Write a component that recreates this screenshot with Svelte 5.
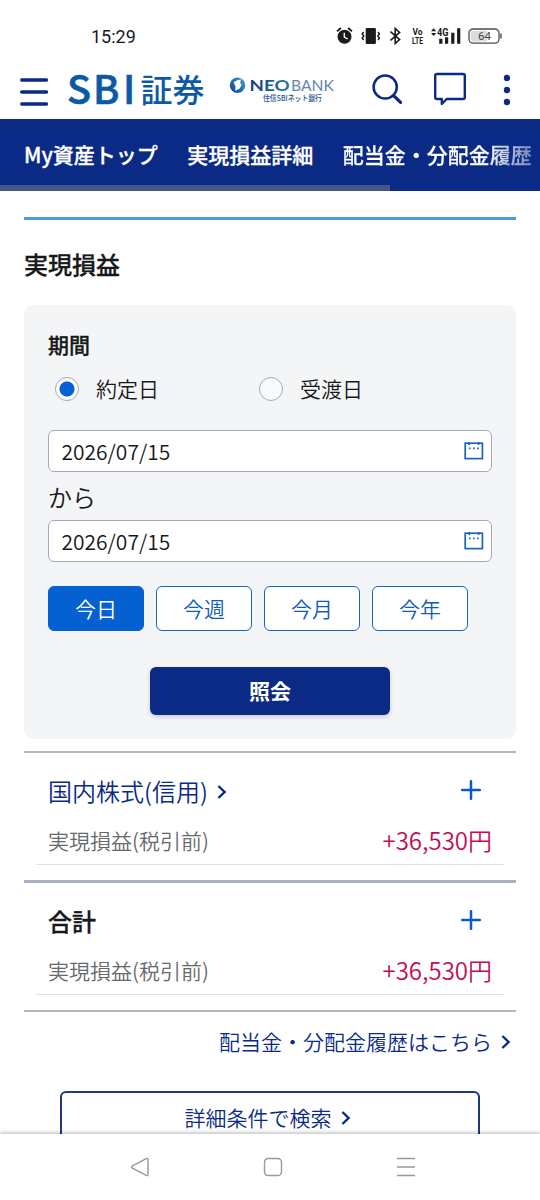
<script lang="ts">
    const tabs = ["My資産トップ", "実現損益詳細", "配当金・分配金履歴"];
    const dateTypes = ["約定日", "受渡日"];
    const ranges = ["今日", "今週", "今月", "今年"];

    const results = [
        { name: "国内株式(信用)", link: true, label: "実現損益(税引前)", value: "+36,530円" },
        { name: "合計", link: false, label: "実現損益(税引前)", value: "+36,530円" },
    ];

    let dateType = $state("約定日");
    let range = $state("今日");
    let from = $state("2026/07/15");
    let to = $state("2026/07/15");
</script>

{#snippet chevron()}
    <svg class="chevron" width="10" height="16" viewBox="0 0 10 16">
        <path d="M1.4 2 L7.6 8 L1.4 14" fill="none" stroke="currentColor" stroke-width="2.4" />
    </svg>
{/snippet}

{#snippet calendar()}
    <svg class="calendar" width="20" height="20" viewBox="0 0 20 20" fill="none" stroke="#1765c1">
        <rect x="1.2" y="2.2" width="17.2" height="15.4" stroke-width="1.7" />
        <path d="M5.2 1v3M14.6 1v3" stroke-width="1.6" />
        <path d="M5 7.4h1.6M9 7.4h1.6M13 7.4h1.6" stroke-width="1.7" />
    </svg>
{/snippet}

<div class="screen">
    <div class="status">
        <span class="time">15:29</span>
        <svg class="status-icons" width="166" height="20" viewBox="0 0 166 20">
            <!-- alarm -->
            <circle cx="8.5" cy="10.8" r="7" fill="#1b1b1b" />
            <path d="M1 5.2L5 2M16 5.2L12 2" stroke="#1b1b1b" stroke-width="1.8" />
            <path d="M8.3 6.8v4.4l3.4 1.8" fill="none" stroke="#fff" stroke-width="1.4" />
            <!-- vibrate -->
            <rect x="29.7" y="2" width="10.2" height="16" rx="1.2" fill="#1b1b1b" />
            <path
                d="M27.6 6l-1.4 2 1.6 2-1.6 2 1.4 2M42 6l1.4 2-1.6 2 1.6 2-1.4 2"
                fill="none"
                stroke="#1b1b1b"
                stroke-width="1.5"
            />
            <!-- bluetooth -->
            <path
                d="M54.5 5.6L63.6 13.6 59.2 17.4V2.6L63.6 6.4 54.5 14.4"
                fill="none"
                stroke="#1b1b1b"
                stroke-width="1.6"
            />
            <text x="76.4" y="9" font-size="9.5" textLength="10" lengthAdjust="spacingAndGlyphs">Vo</text>
            <text x="76" y="18" font-size="9.5" textLength="11" lengthAdjust="spacingAndGlyphs">LTE</text>
            <!-- signal -->
            <path d="M95 5.2l2.6-3 2.6 3zM95 7l2.6 3 2.6-3z" fill="#1b1b1b" />
            <text x="101" y="9.6" font-size="11" textLength="11.5" lengthAdjust="spacingAndGlyphs">4G</text>
            <path
                d="M104.8 17.8v-5M110.6 17.8v-6.5M116.8 17.8v-11M122.7 17.8v-15.5"
                stroke="#1b1b1b"
                stroke-width="3.2"
            />
            <!-- battery -->
            <rect x="133" y="3" width="30" height="14.2" rx="4.2" fill="#fff" stroke="#4c4c4c" stroke-width="1.3" />
            <path d="M137 4.8h14v10.6h-14q-2.2 0-2.2-2.2v-6.2q0-2.2 2.2-2.2z" fill="#dcdcdc" />
            <path d="M165 7.6v5" stroke="#4c4c4c" stroke-width="1.4" />
            <text class="level" x="142" y="14.2" font-size="11.5">64</text>
        </svg>
    </div>

    <header>
        <svg class="menu" width="28" height="30" viewBox="0 0 28 30">
            <path
                d="M1.8 3h24.6M1.8 15h24.6M1.8 27h24.6"
                stroke="#0a2a86"
                stroke-width="3.6"
                stroke-linecap="round"
            />
        </svg>
        <svg class="logo" width="140" height="44" viewBox="0 0 140 44">
            <text class="latin" x="-1 25 55" y="34.5" font-size="39.5">SBI</text>
            <text x="72.5" y="32.5" font-size="32" font-weight="500">証券</text>
        </svg>
        <svg class="neobank" width="108" height="34" viewBox="0 0 108 34">
            <defs>
                <linearGradient id="ball" x1="0" y1="1" x2="1" y2="0">
                    <stop offset="0" stop-color="#0c3f8c" />
                    <stop offset="1" stop-color="#3da4d8" />
                </linearGradient>
                <linearGradient id="word" x1="0" x2="1">
                    <stop offset="0" stop-color="#123f7d" />
                    <stop offset="1" stop-color="#2277a8" />
                </linearGradient>
            </defs>
            <circle cx="8.5" cy="11.3" r="7.7" fill="url(#ball)" />
            <path d="M4.6 8.6l3-2.2 4.4-1.2-.8 3.4 1.4 2.6-2.2 3.6-4.4 2 .6-4.4z" fill="#fff" />
            <text x="20.6" y="16.8" font-size="16" font-weight="700" fill="url(#word)" textLength="40" lengthAdjust="spacingAndGlyphs">NEO</text>
            <text x="62" y="16.8" font-size="16" font-weight="400" fill="#6486ac" textLength="43" lengthAdjust="spacingAndGlyphs">BANK</text>
            <text class="sub" x="34" y="27" font-size="7.6" textLength="59" lengthAdjust="spacingAndGlyphs">住信SBIネット銀行</text>
        </svg>
        <svg class="search" width="32" height="32" viewBox="0 0 32 32" fill="none" stroke="#0a2a86">
            <circle cx="13.2" cy="14" r="11.6" stroke-width="2.5" />
            <path d="M21.6 22.6l7 6.8" stroke-width="3.2" stroke-linecap="round" />
        </svg>
        <svg class="chat" width="34" height="34" viewBox="0 0 34 34">
            <path
                d="M4 2h26q1.8 0 1.8 1.8v21.4q0 1.8-1.8 1.8h-16.4l-4.8 5v-5h-4.8q-1.8 0-1.8-1.8v-21.4q0-1.8 1.8-1.8z"
                fill="none"
                stroke="#0a2a86"
                stroke-width="2.4"
                stroke-linejoin="round"
            />
        </svg>
        <svg class="more" width="8" height="32" viewBox="0 0 8 32" fill="#0a2a86">
            <circle cx="4" cy="4" r="3.2" />
            <circle cx="4" cy="16" r="3.2" />
            <circle cx="4" cy="28" r="3.2" />
        </svg>
    </header>

    <nav>
        {#each tabs as tab}
            <a href="#top">{tab}</a>
        {/each}
    </nav>

    <main>
        <h1>実現損益</h1>

        <section class="filter">
            <h2>期間</h2>
            <div class="radios">
                {#each dateTypes as type}
                    <label>
                        <input type="radio" name="dateType" value={type} bind:group={dateType} />
                        <span>{type}</span>
                    </label>
                {/each}
            </div>

            <div class="field">
                <input type="text" bind:value={from} />
                {@render calendar()}
            </div>
            <p class="until">から</p>
            <div class="field">
                <input type="text" bind:value={to} />
                {@render calendar()}
            </div>

            <div class="ranges">
                {#each ranges as item}
                    <button class:active={range === item} onclick={() => (range = item)}>{item}</button>
                {/each}
            </div>

            <button class="submit">照会</button>
        </section>

        <section class="results">
            {#each results as item}
                <article>
                    <div class="title">
                        {#if item.link}
                            <a href="#top">{item.name}{@render chevron()}</a>
                        {:else}
                            <strong>{item.name}</strong>
                        {/if}
                        <svg class="plus" width="20" height="20" viewBox="0 0 20 20">
                            <path
                                d="M1.2 10h17.6M10 1.2v17.6"
                                stroke="#0c5abf"
                                stroke-width="2.5"
                                stroke-linecap="round"
                            />
                        </svg>
                    </div>
                    <div class="row">
                        <span>{item.label}</span>
                        <span class="gain">{item.value}</span>
                    </div>
                </article>
            {/each}
        </section>

        <a class="history" href="#top">配当金・分配金履歴はこちら{@render chevron()}</a>
        <a class="detail" href="#top">詳細条件で検索{@render chevron()}</a>
    </main>

    <footer>
        <svg width="20" height="20" viewBox="0 0 20 20">
            <path d="M2 9.2L16.2 1.6q1.8-.8 1.8 1v14.8q0 1.8-1.8 1L2 10.8q-1-.8 0-1.6z" />
        </svg>
        <svg width="20" height="20" viewBox="0 0 20 20">
            <rect x="1.5" y="1.5" width="17" height="17" rx="3.8" />
        </svg>
        <svg width="20" height="20" viewBox="0 0 20 20">
            <path d="M1 1.5h18M1 10h18M1 18.5h18" />
        </svg>
    </footer>
</div>

<style>
    :global(body) {
        margin: 0;
        background: #fff;
    }

    .screen {
        display: flex;
        flex-direction: column;
        width: 540px;
        height: 1200px;
        overflow: hidden;
        background: #fff;
        color: #17181a;
        font-family: "Noto Sans CJK JP", sans-serif;
        font-size: 21px;
        font-weight: 350;
    }

    .screen *,
    .screen {
        box-sizing: border-box;
    }

    svg {
        display: block;
        flex: none;
    }

    a {
        color: #0a2a86;
        text-decoration: none;
    }

    h1,
    h2,
    p {
        margin: 0;
    }

    h1,
    h2,
    nav a,
    strong {
        font-weight: 500;
        -webkit-text-stroke: 0.3px currentColor;
    }

    .status {
        display: flex;
        flex: none;
        justify-content: space-between;
        align-items: center;
        height: 60px;
        padding: 12px 38px 0 91px;
        font-family: Roboto, sans-serif;
        font-weight: 400;
    }

    .time {
        padding-top: 2px;
        font-size: 18px;
        line-height: 20px;
    }

    .status-icons text {
        font-family: Roboto, sans-serif;
        font-weight: 700;
        fill: #1b1b1b;
    }

    .status-icons .level {
        font-weight: 400;
        fill: #444;
    }

    header {
        display: flex;
        flex: none;
        align-items: flex-start;
        height: 59px;
        padding: 9px 29px 0 20px;
    }

    .menu {
        margin: 8px 20px 0 0;
    }

    .logo {
        overflow: visible;
    }

    .logo text {
        font-family: "Noto Sans CJK JP", sans-serif;
        fill: #0c5aa6;
    }

    .logo .latin {
        font-weight: 500;
        stroke: #0c5aa6;
        stroke-width: 0.7;
    }

    .neobank {
        margin: 5px 0 0 20.5px;
    }

    .neobank text {
        font-family: Lato, sans-serif;
    }

    .neobank .sub {
        font-family: "Noto Sans CJK JP", sans-serif;
        font-weight: 500;
        fill: #274f8f;
    }

    .search {
        margin: 4px 0 0 35px;
    }

    .chat {
        margin: 3px 0 0 29px;
    }

    .more {
        margin: 5px 0 0 auto;
    }

    nav {
        display: flex;
        flex: none;
        gap: 29.5px;
        height: 72px;
        padding: 0 0 0 24px;
        background:
            linear-gradient(#485587, #485587) 0 100% / 390px 6px no-repeat,
            #0a2a86;
    }

    nav a {
        color: #fff;
        line-height: 70px;
        white-space: nowrap;
    }

    /* the last tab fades out towards the edge */
    nav a:last-child {
        color: transparent;
        background: linear-gradient(90deg, #fff 76%, #8494c2 97%);
        background-clip: text;
    }

    main {
        display: flex;
        flex: 1;
        flex-direction: column;
        min-height: 0;
        margin-top: 26px;
        padding: 0 24px;
        overflow: hidden;
    }

    h1 {
        flex: none;
        height: 88px;
        padding-top: 26px;
        border-top: 3px solid #4a9fda;
        font-size: 24px;
        line-height: 35px;
    }

    .filter {
        flex: none;
        height: 434px;
        padding: 24px;
        border-radius: 9px;
        background: #f3f5f7;
    }

    h2 {
        height: 32px;
        font-size: 21px;
        line-height: 30px;
    }

    .radios {
        display: grid;
        grid-template-columns: 204px 204px;
        height: 69px;
        padding: 11px 0 0 7px;
    }

    .radios label {
        display: flex;
        height: 32px;
        line-height: 33px;
    }

    .radios input {
        appearance: none;
        width: 24px;
        height: 24px;
        margin: 5px 17px 0 0;
        border: 1.5px solid #a4a9b9;
        border-radius: 50%;
        background: #f8f9fa;
    }

    .radios input:checked {
        background: radial-gradient(circle, #0560d2 7px, #fff 8px);
    }

    .field {
        display: flex;
        align-items: center;
        height: 42px;
        padding: 0 7px 0 12.5px;
        border: 1.5px solid #a4a9b9;
        border-radius: 6px;
        background: #fff;
    }

    .field input {
        flex: 1;
        min-width: 0;
        padding: 0;
        border: 0;
        outline: 0;
        background: none;
        color: inherit;
        font: inherit;
        line-height: 32px;
    }

    .until {
        height: 48px;
        font-size: 24px;
        line-height: 49px;
    }

    .ranges {
        display: flex;
        gap: 12px;
        margin-top: 24px;
    }

    button {
        font: inherit;
        padding: 0 0 2px;
        cursor: pointer;
    }

    .ranges button {
        width: 96px;
        height: 45px;
        border: 1.5px solid #1765c1;
        border-radius: 6px;
        background: #fff;
        color: #0f5bbd;
    }

    .ranges .active {
        border-color: #0560d2;
        background: #0560d2;
        color: #fff;
    }

    .submit {
        display: block;
        width: 240px;
        height: 48px;
        margin: 36px auto 0;
        border: 0;
        border-radius: 6px;
        background: #0a2a86;
        box-shadow: 0 2px 4px rgba(20, 30, 80, 0.2);
        color: #fff;
        font-weight: 700;
    }

    .results {
        flex: none;
        margin-top: 12px;
        border-bottom: 2px solid #b3b7c4;
    }

    article {
        height: 129px;
        padding: 0 12px;
        border-top: 2px solid #b3b7c4;
    }

    article + article {
        height: 130px;
        border-top: 3px solid #a9b0c3;
    }

    .title {
        display: flex;
        justify-content: space-between;
        align-items: center;
        height: 77px;
        padding: 0 23px 3px 12px;
        font-size: 24px;
    }

    .title a,
    .history,
    .detail {
        display: flex;
        align-items: center;
    }

    .title .chevron {
        margin: 3px 0 0 9px;
    }

    .row {
        display: flex;
        justify-content: space-between;
        height: 35px;
        padding: 0 12px;
        border-bottom: 1px solid #dfe2e6;
        color: #67696d;
        line-height: 20px;
    }

    .gain {
        color: #c40c52;
        font-size: 24px;
    }

    .history {
        flex: none;
        justify-content: flex-end;
        height: 60px;
        padding: 0 5px 3px 0;
    }

    .history .chevron,
    .detail .chevron {
        margin: 2px 0 0 9px;
    }

    .detail {
        flex: none;
        justify-content: center;
        width: 420px;
        height: 56px;
        margin: 19px auto 0;
        padding: 0 5px 4px 0;
        border: 2px solid #1c3a80;
        border-radius: 6px;
    }

    footer {
        position: relative;
        display: flex;
        flex: none;
        gap: 113px;
        height: 66px;
        padding: 23px 0 0 130px;
        background: #fff;
        box-shadow: 0 -1px 4px rgba(0, 0, 0, 0.3);
    }

    footer svg {
        fill: none;
        stroke: #999;
        stroke-width: 1.4;
    }
</style>
